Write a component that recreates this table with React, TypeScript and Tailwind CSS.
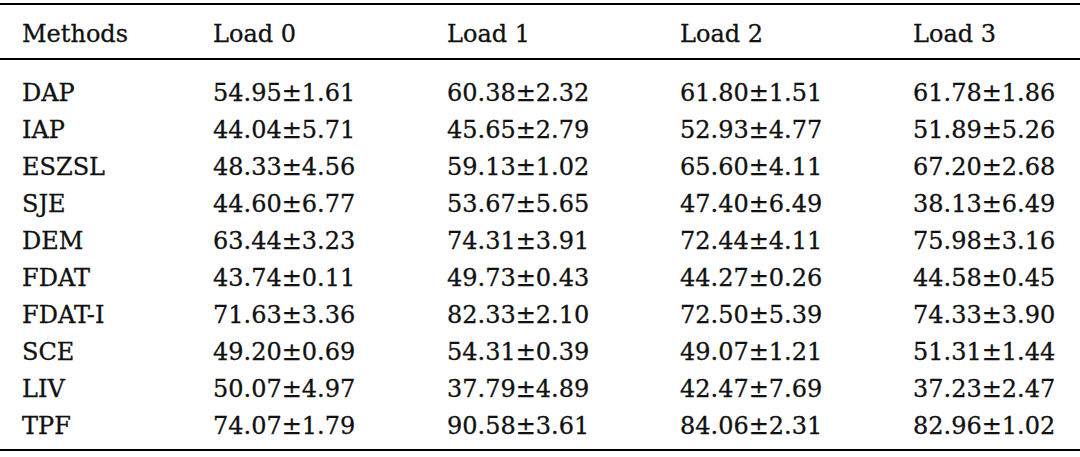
import React from "react";

const rows: [string, string, string, string, string][] = [
  ["DAP", "54.95±1.61", "60.38±2.32", "61.80±1.51", "61.78±1.86"],
  ["IAP", "44.04±5.71", "45.65±2.79", "52.93±4.77", "51.89±5.26"],
  ["ESZSL", "48.33±4.56", "59.13±1.02", "65.60±4.11", "67.20±2.68"],
  ["SJE", "44.60±6.77", "53.67±5.65", "47.40±6.49", "38.13±6.49"],
  ["DEM", "63.44±3.23", "74.31±3.91", "72.44±4.11", "75.98±3.16"],
  ["FDAT", "43.74±0.11", "49.73±0.43", "44.27±0.26", "44.58±0.45"],
  ["FDAT-I", "71.63±3.36", "82.33±2.10", "72.50±5.39", "74.33±3.90"],
  ["SCE", "49.20±0.69", "54.31±0.39", "49.07±1.21", "51.31±1.44"],
  ["LIV", "50.07±4.97", "37.79±4.89", "42.47±7.69", "37.23±2.47"],
  ["TPF", "74.07±1.79", "90.58±3.61", "84.06±2.31", "82.96±1.02"],
];

const gridCols = "grid grid-cols-[191px_234px_233px_233px_1fr] pl-[22px]";

export default function App() {
  return (
    <div className="w-[1080px] h-[457px] bg-white pt-[3px] text-[#111] text-[24px] leading-none [font-family:'DejaVu_Serif',serif] [-webkit-text-stroke:0.3px_#111]">
      <div className="border-t-2 border-b-2 border-black">
        <div className={`${gridCols} h-[55px] pt-[5px] items-center border-b-2 border-black`}>
          <div>Methods</div>
          <div>Load 0</div>
          <div>Load 1</div>
          <div>Load 2</div>
          <div>Load 3</div>
        </div>
        <div className="pt-[14px] pb-[5px]">
          {rows.map((r) => (
            <div key={r[0]} className={`${gridCols} h-[37px] items-center`}>
              {r.map((c, i) => (
                <div key={i}>{c}</div>
              ))}
            </div>
          ))}
        </div>
      </div>
    </div>
  );
}
